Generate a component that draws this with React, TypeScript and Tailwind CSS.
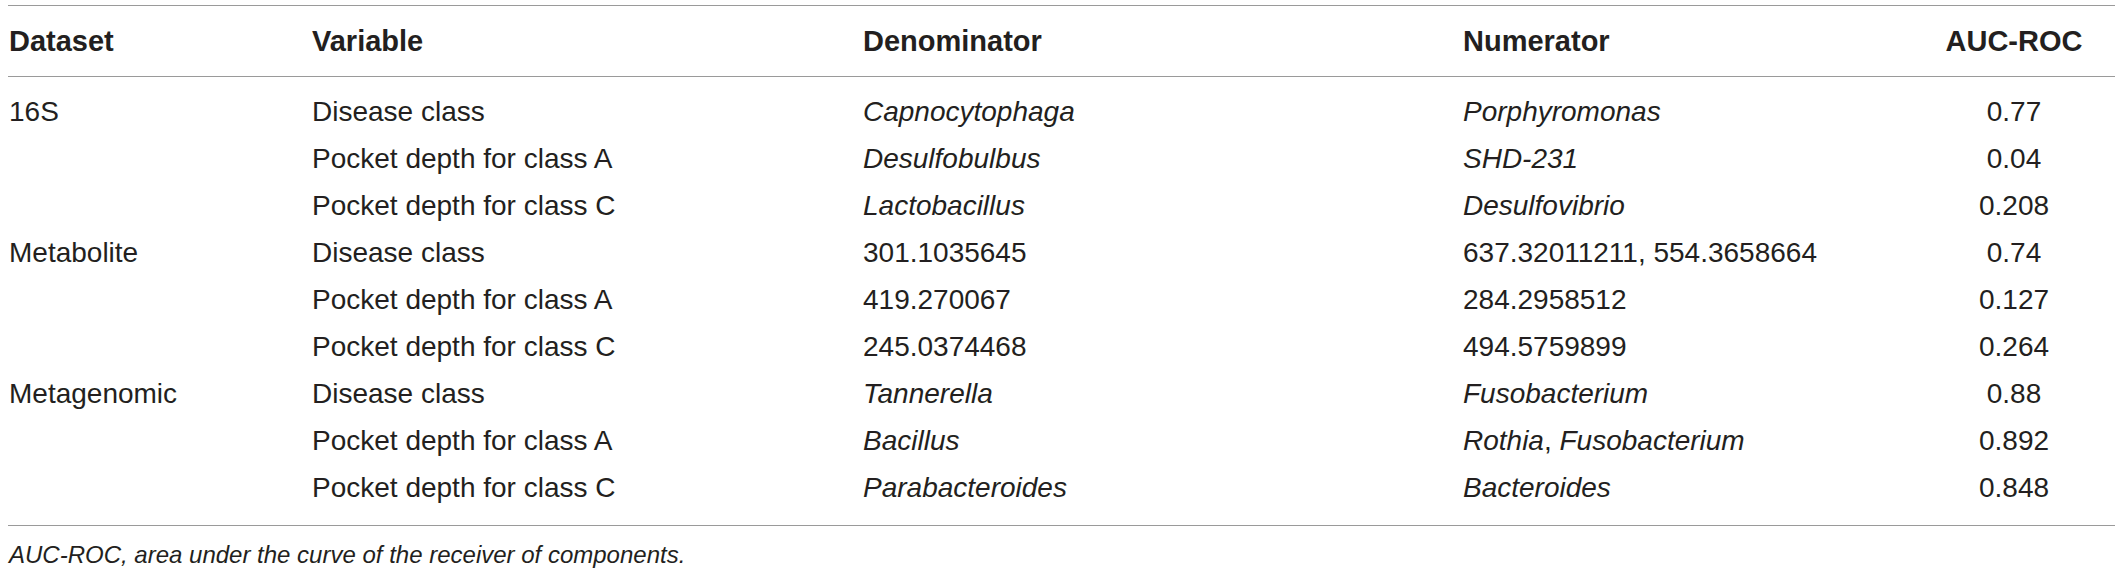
import React from "react";

type Row = {
  dataset?: string;
  variable: string;
  den: React.ReactNode;
  denItalic: boolean;
  num: React.ReactNode;
  numItalic: boolean;
  auc: string;
};

const rows: Row[] = [
  { dataset: "16S", variable: "Disease class", den: "Capnocytophaga", denItalic: true, num: "Porphyromonas", numItalic: true, auc: "0.77" },
  { variable: "Pocket depth for class A", den: "Desulfobulbus", denItalic: true, num: "SHD-231", numItalic: true, auc: "0.04" },
  { variable: "Pocket depth for class C", den: "Lactobacillus", denItalic: true, num: "Desulfovibrio", numItalic: true, auc: "0.208" },
  { dataset: "Metabolite", variable: "Disease class", den: "301.1035645", denItalic: false, num: "637.32011211, 554.3658664", numItalic: false, auc: "0.74" },
  { variable: "Pocket depth for class A", den: "419.270067", denItalic: false, num: "284.2958512", numItalic: false, auc: "0.127" },
  { variable: "Pocket depth for class C", den: "245.0374468", denItalic: false, num: "494.5759899", numItalic: false, auc: "0.264" },
  { dataset: "Metagenomic", variable: "Disease class", den: "Tannerella", denItalic: true, num: "Fusobacterium", numItalic: true, auc: "0.88" },
  { variable: "Pocket depth for class A", den: "Bacillus", denItalic: true, num: (<><span className="italic">Rothia</span>, <span className="italic">Fusobacterium</span></>), numItalic: false, auc: "0.892" },
  { variable: "Pocket depth for class C", den: "Parabacteroides", denItalic: true, num: "Bacteroides", numItalic: true, auc: "0.848" },
];

const grid = "grid grid-cols-[304px_551px_600px_450px_202px]";

export default function App() {
  return (
    <div
      className="w-[2120px] h-[575px] bg-white pt-[5px] pl-[8px] text-[#231f20]"
      style={{ fontFamily: '"Liberation Sans", Arial, sans-serif' }}
    >
      <div className="w-[2107px]">
        <div className={`${grid} h-[72px] items-center border-t border-b border-[#9a9a9a] text-[29px] font-bold leading-none`}>
          <div className="pl-px">Dataset</div>
          <div>Variable</div>
          <div>Denominator</div>
          <div>Numerator</div>
          <div className="text-center">AUC-ROC</div>
        </div>
        <div className="pt-[11px] pb-[14px] border-b border-[#9a9a9a] text-[28px] leading-none">
          {rows.map((r, i) => (
            <div key={i} className={`${grid} h-[47px] items-center`}>
              <div className="pl-px">{r.dataset ?? ""}</div>
              <div>{r.variable}</div>
              <div className={r.denItalic ? "italic" : ""}>{r.den}</div>
              <div className={r.numItalic ? "italic" : ""}>{r.num}</div>
              <div className="text-center">{r.auc}</div>
            </div>
          ))}
        </div>
        <div className="mt-[14px] pl-px text-[24px] italic leading-[30px]">
          AUC-ROC, area under the curve of the receiver of components.
        </div>
      </div>
    </div>
  );
}
